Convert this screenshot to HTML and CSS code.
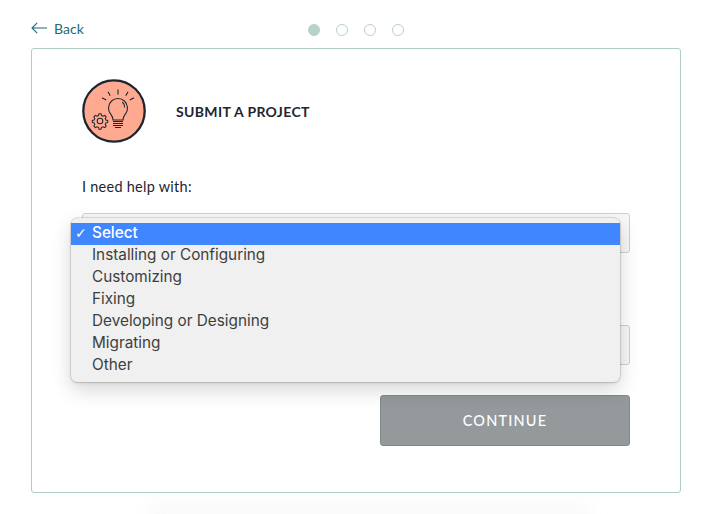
FILE: index.html
```html
<!DOCTYPE html>
<html lang="en">
<head>
<meta charset="utf-8">
<title>Submit a project</title>
<link rel="stylesheet" href="styles.css">
</head>
<body>
<div class="page">
  <header class="topbar">
    <a class="back" href="#">
      <svg class="back-arrow" width="17" height="12" viewBox="0 0 17 12" fill="none" stroke="#1f6b78" stroke-width="1.1"><path d="M16 6H1M6.2 .8 1 6l5.2 5.2"/></svg>
      <span>Back</span>
    </a>
    <div class="steps">
      <span class="step step-on"></span>
      <span class="step"></span>
      <span class="step"></span>
      <span class="step"></span>
    </div>
  </header>
  <main class="card">
    <div class="title-row">
      <svg class="badge" width="64" height="64" viewBox="0 0 64 64" fill="none" stroke="#1d2630">
        <circle cx="32" cy="32" r="30.7" fill="#ffaa90" stroke-width="2.3"/>
        <g stroke-width="1.100">
          <path d="M31 41c0-3-1.200-4.500-2.500-6.200a9.500 9.500 0 1 1 15 0c-1.300 1.700-2.500 3.200-2.500 6.200z"/>
          <path d="M40.300 23a6.500 6.500 0 0 1 2.300 5.500"/>
          <path d="M36 10.500v5M26 12.700l2.200 4M20 18.700l4.200 2.200M46 12.700l-2.200 4M52 18.700l-4.200 2.200"/>
        </g>
        <path stroke-width="1" d="M31 42.500H41M31 44.500H41M31 46.500H41M33 48.500H39"/>
        <g stroke-width="1.300" transform="translate(18 42) scale(.78) translate(-19.800 -42.800)">
          <path d="M18.500 33.500h2.600l.6 2.300 2 .9 2.100-1.200 1.900 1.900-1.200 2.100.9 2 2.300.6v2.600l-2.300.6-.9 2 1.200 2.100-1.900 1.900-2.100-1.200-2 .9-.6 2.300h-2.600l-.6-2.300-2-.9-2.100 1.200-1.900-1.900 1.200-2.100-.9-2-2.300-.6v-2.600l2.300-.6.9-2-1.200-2.100 1.900-1.900 2.100 1.200 2-.9z"/>
          <circle cx="19.800" cy="42.800" r="3.600"/>
        </g>
      </svg>
      <h1 class="title">SUBMIT A PROJECT</h1>
    </div>
    <p class="label">I need help with:</p>
    <div class="field"></div>
    <div class="field field-second"></div>
    <div class="actions"><button class="continue" type="button">CONTINUE</button></div>
    <ul class="menu">
      <li class="menu-item menu-item-selected"><span class="check">✓</span>Select</li>
      <li class="menu-item">Installing or Configuring</li>
      <li class="menu-item">Customizing</li>
      <li class="menu-item">Fixing</li>
      <li class="menu-item">Developing or Designing</li>
      <li class="menu-item">Migrating</li>
      <li class="menu-item">Other</li>
    </ul>
  </main>
  <div class="floor-glow"></div>
</div>
</body>
</html>
```
FILE: styles.css
```css
* { box-sizing: border-box; }
html, body { margin: 0; height: 100%; background: #fff; overflow: hidden; }
.page { position: relative; width: 711px; height: 514px; padding: 0 30px 0 31px; overflow: hidden; font-family: "Lato", sans-serif; }
.topbar { position: relative; height: 48px; display: flex; align-items: center; justify-content: center; }
.back { position: absolute; left: 0; top: 20px; display: flex; align-items: center; gap: 6px; color: #1f6b78; font-size: 14px; letter-spacing: .05px; line-height: 18px; text-decoration: none; }
.back-arrow { display: block; margin-top: -3px; }
.steps { display: flex; gap: 16px; margin: 12px 0 0 -1px; }
.step { width: 12px; height: 12px; border-radius: 50%; border: 1.5px solid #b7d2c9; background: #fff; }
.step-on { background: #b7d2c9; }
.card { position: relative; z-index: 1; width: 650px; height: 445px; padding: 30px 50px 0; border: 1px solid #aecdc5; border-radius: 3px; background: #fff; }
.title-row { display: flex; align-items: center; gap: 30px; height: 64px; }
.badge { display: block; flex: none; }
.title { margin: 1px 0 0; font-size: 14px; font-weight: 700; letter-spacing: .35px; color: #1d2630; }
.label { margin: 35px 0 0; height: 18px; line-height: 18px; font-size: 14.500px; letter-spacing: .25px; color: #1d2630; }
.field { height: 40px; margin-top: 17px; width: 548px; border: 1px solid #c2d8d2; border-radius: 3px; background: #f7f7f7; }
.field-second { margin-top: 72px; }
.actions { display: flex; justify-content: flex-end; width: 548px; margin-top: 30px; }
.continue { width: 250px; height: 51px; padding: 0; border: 1px solid #83888a; border-radius: 3px; background: #94999b; color: #fff; font-family: "Lato", sans-serif; font-size: 14.500px; font-weight: 500; letter-spacing: 1.200px; }
.menu { position: absolute; left: 39px; top: 169px; width: 549px; height: 164px; margin: 0; padding: 5px 0; list-style: none; background: #f0f0f0; border-radius: 6px; box-shadow: 0 0 0 .5px rgba(0,0,0,.2), 0 8px 20px rgba(0,0,0,.16), 0 1px 3px rgba(0,0,0,.12); font-family: "Inter", sans-serif; font-size: 15.300px; color: #3e3e3e; }
.menu-item { position: relative; height: 22px; line-height: 19px; padding-left: 21px; }
.menu-item-selected { background: #3f86ff; color: #fff; font-weight: 500; }
.check { position: absolute; left: 4px; top: 1px; font-size: 14px; font-family: "DejaVu Sans", sans-serif; }
.floor-glow { position: absolute; left: 150px; top: 500px; width: 440px; height: 30px; background: #fafafa; filter: blur(8px); }
```
